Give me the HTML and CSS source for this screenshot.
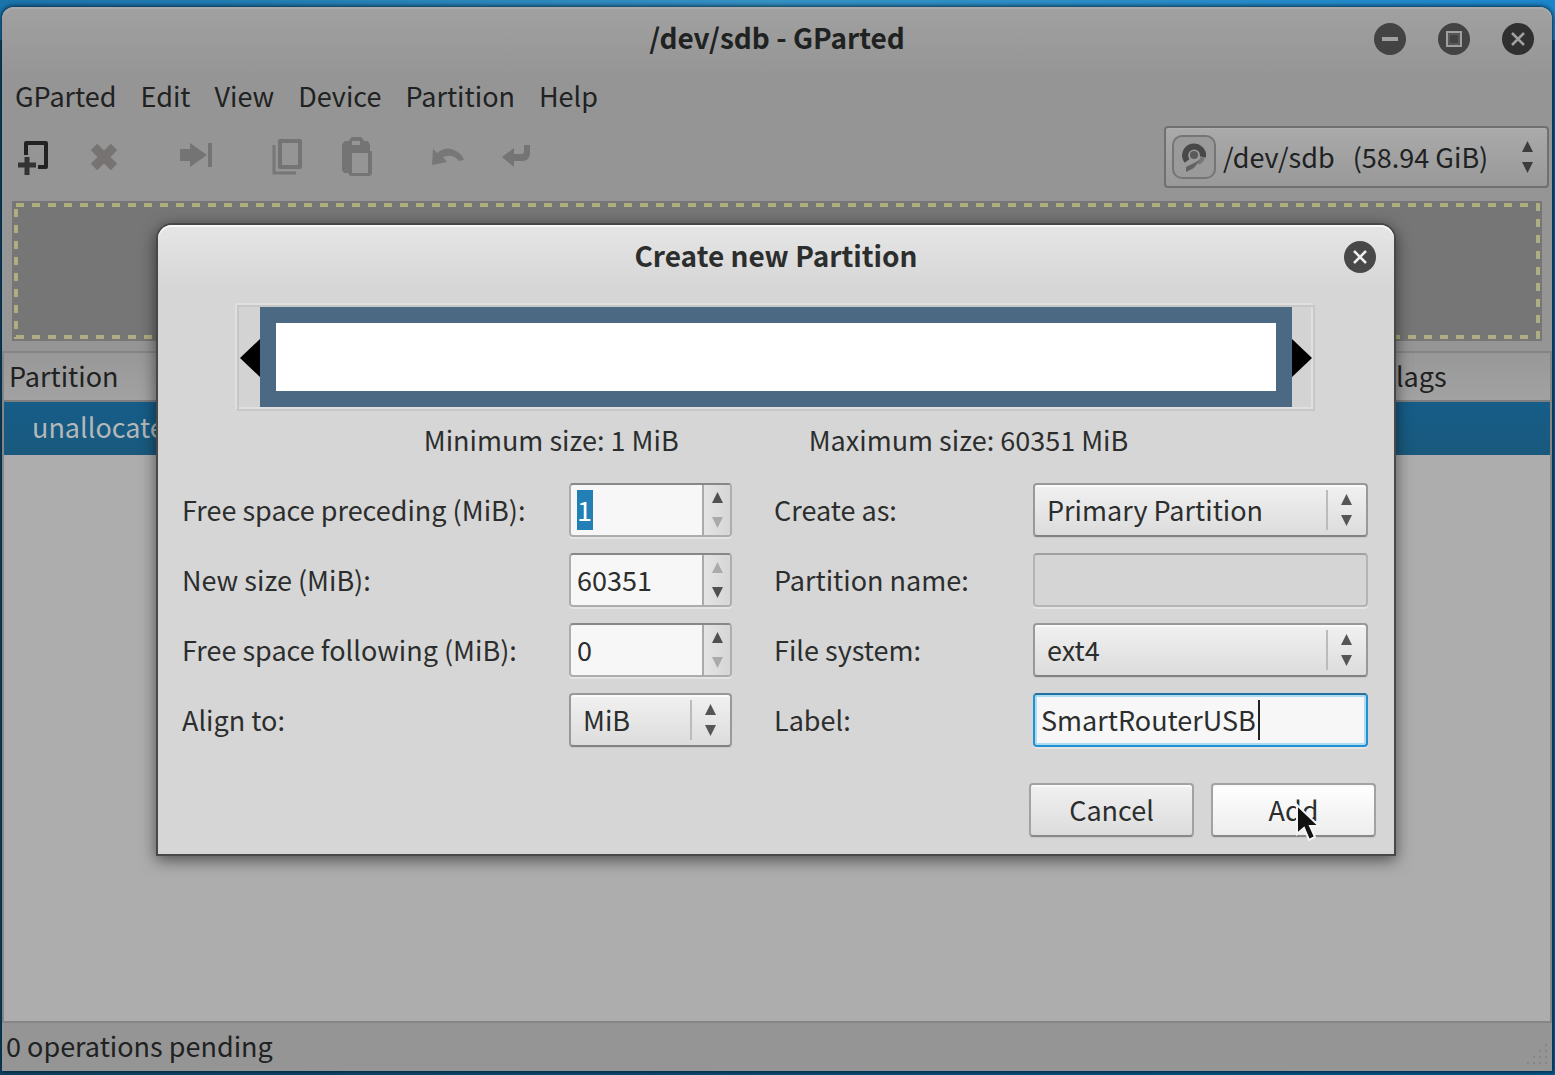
FILE: index.html
```html
<!DOCTYPE html>
<html lang="en">
<head>
<meta charset="utf-8">
<title>/dev/sdb - GParted</title>
<link rel="stylesheet" href="styles.css">
</head>
<body>
<svg class="defs" aria-hidden="true">
  <symbol id="close" viewBox="0 0 32 32"><circle cx="16" cy="16" r="16" fill="currentColor"/><path d="M10 10l12 12M22 10l-12 12" stroke="var(--glyph)" stroke-width="2.500"/></symbol>
  <symbol id="up" viewBox="0 0 11 11"><path d="M5.500 0L11 11H0z" fill="currentColor"/></symbol>
  <symbol id="down" viewBox="0 0 11 11"><path d="M0 0h11L5.500 11z" fill="currentColor"/></symbol>
</svg>
<main class="window">
  <header class="titlebar">
    <h1>/dev/sdb - GParted</h1>
    <div class="controls">
      <button class="round" aria-label="Minimize"><svg viewBox="0 0 32 32"><circle cx="16" cy="16" r="16" fill="#434343"/><path d="M8 16h16" stroke="#a0a0a0" stroke-width="4"/></svg></button>
      <button class="round" aria-label="Maximize"><svg viewBox="0 0 32 32"><circle cx="16" cy="16" r="16" fill="#434343"/><path d="M9 9h14v14H9z" fill="#434343" stroke="#a0a0a0" stroke-width="2"/><path d="M11 11h10v10H11z" fill="none" stroke="#6a6a6a"/></svg></button>
      <button class="round dark" aria-label="Close"><svg><use href="#close"/></svg></button>
    </div>
  </header>
  <nav class="menubar">
    <button>GParted</button><button>Edit</button><button>View</button><button>Device</button><button>Partition</button><button>Help</button>
  </nav>
  <div class="toolbar">
    <button class="tool enabled" aria-label="New"><svg viewBox="18 137 32 40"><path d="M26 155v-12h20v24h-8" fill="none" stroke="#222" stroke-width="4" stroke-linejoin="round"/><path d="M18 165h18M27 157v18" stroke="#333" stroke-width="5"/></svg></button>
    <button class="tool group-end" aria-label="Delete" disabled><svg viewBox="88 137 32 40"><path d="M94 147l20 20M114 147l-20 20" stroke="#777372" stroke-width="9"/></svg></button>
    <button class="tool group-end" aria-label="Resize or move" disabled><svg viewBox="180 137 32 40"><path d="M180 149h10v-6l17 12-17 12v-6h-10zM208 143h4v24h-4z" fill="#747474"/></svg></button>
    <button class="tool" aria-label="Copy" disabled><svg viewBox="272 137 32 40"><path d="M280 141h20v26h-20z" fill="none" stroke="#747474" stroke-width="4" stroke-linejoin="round"/><path d="M274 145v28h22" fill="none" stroke="#777" stroke-width="3"/></svg></button>
    <button class="tool group-end" aria-label="Paste" disabled><svg viewBox="342 137 32 40"><path fill-rule="evenodd" d="M350 139l2-2h9l2 2 1 2h4l2 4v6h2v23l-2 2h-20l-2-3h-4l-2-3v-26l3-3h4zM352 141v4h8v-4zM352 153v20h16v-20z" fill="#747474"/></svg></button>
    <button class="tool" aria-label="Undo" disabled><svg viewBox="434 137 32 40"><path d="M433 149l4 4q10-8 19-2 6 3 8 9l-5 1q-6-8-16-4l4 5-15 3z" fill="#777"/></svg></button>
    <button class="tool" aria-label="Apply" disabled><svg viewBox="504 137 32 40"><path d="M502 157l12-9v6h8q2 0 2-3v-6h6v8q0 7-7 8h-9v6z" fill="#747474"/></svg></button>
    <div class="combo device">
      <svg class="disk" viewBox="1172 135 44 44" aria-hidden="true"><rect x="1173" y="136" width="42" height="42" rx="9" fill="#9a9a9a" stroke="#757575" stroke-width="2"/><path d="M1187 161a9 9 0 1 1 16-4" fill="none" stroke="#484848" stroke-width="6"/><path d="M1203 157a9 9 0 0 1-5 6" fill="none" stroke="#777" stroke-width="4"/><circle cx="1194" cy="155" r="4" fill="#5a5a5a"/><path d="M1200 160l-6 8-8 4v-5l8-4z" fill="#626262"/></svg>
      <select aria-label="Device"><option>/dev/sdb&nbsp;&nbsp; (58.94 GiB)</option></select>
      <span class="arrows"><svg><use href="#up"/></svg><svg><use href="#down"/></svg></span>
    </div>
  </div>
  <div class="disk-map"></div>
  <section class="list">
    <table>
      <colgroup><col><col class="flags"></colgroup>
      <thead><tr><th>Partition</th><th>Flags</th></tr></thead>
      <tbody><tr><td>unallocated</td><td></td></tr></tbody>
    </table>
  </section>
  <footer class="statusbar"><span>0 operations pending</span>
    <svg class="grip" viewBox="0 0 22 22" aria-hidden="true"><path d="M18 0h2v2h-2zM12 6h2v2h-2zM18 6h2v2h-2zM6 12h2v2h-2zM12 12h2v2h-2zM18 12h2v2h-2zM0 18h2v2h-2zM6 18h2v2h-2zM12 18h2v2h-2zM18 18h2v2h-2z" fill="#858585"/></svg>
  </footer>

  <form class="dialog" role="dialog" aria-labelledby="dialog-title">
    <header class="dialog-title">
      <h2 id="dialog-title">Create new Partition</h2>
      <button type="button" class="round" aria-label="Close dialog"><svg><use href="#close"/></svg></button>
    </header>
    <div class="resizer">
      <svg class="handle" viewBox="0 0 20 38"><path d="M20 0v38L0 19z"/></svg>
      <div class="extent"></div>
      <svg class="handle" viewBox="0 0 20 38"><path d="M0 0v38L20 19z"/></svg>
    </div>
    <div class="limits"><span>Minimum size: 1 MiB</span><span>Maximum size: 60351 MiB</span></div>
    <div class="fields">
      <label for="before">Free space preceding (MiB):</label>
      <div class="spin"><input id="before" class="selected" value="1"><div class="steps"><button type="button" aria-label="Increase"><svg><use href="#up"/></svg></button><button type="button" aria-label="Decrease" disabled><svg><use href="#down"/></svg></button></div></div>
      <label for="type">Create as:</label>
      <div class="combo"><select id="type"><option>Primary Partition</option></select><span class="arrows"><svg><use href="#up"/></svg><svg><use href="#down"/></svg></span></div>

      <label for="size">New size (MiB):</label>
      <div class="spin"><input id="size" value="60351"><div class="steps"><button type="button" aria-label="Increase" disabled><svg><use href="#up"/></svg></button><button type="button" aria-label="Decrease"><svg><use href="#down"/></svg></button></div></div>
      <label for="name">Partition name:</label>
      <div class="entry off"><input id="name" disabled></div>

      <label for="after">Free space following (MiB):</label>
      <div class="spin"><input id="after" value="0"><div class="steps"><button type="button" aria-label="Increase"><svg><use href="#up"/></svg></button><button type="button" aria-label="Decrease" disabled><svg><use href="#down"/></svg></button></div></div>
      <label for="fs">File system:</label>
      <div class="combo"><select id="fs"><option>ext4</option></select><span class="arrows"><svg><use href="#up"/></svg><svg><use href="#down"/></svg></span></div>

      <label for="align">Align to:</label>
      <div class="combo"><select id="align"><option>MiB</option></select><span class="arrows"><svg><use href="#up"/></svg><svg><use href="#down"/></svg></span></div>
      <label for="label">Label:</label>
      <div class="entry active"><input id="label" value="SmartRouterUSB"><span class="caret"></span></div>
    </div>
    <div class="actions">
      <button type="button">Cancel</button>
      <button type="submit" class="hover">Add<svg class="pointer" viewBox="0 0 26 40" aria-hidden="true"><path d="M2 2v29l7-6 5 12 6-3-5-11h9z" fill="#111" stroke="#f4f4f4" stroke-width="2"/></svg></button>
    </div>
  </form>
</main>
</body>
</html>
```
FILE: styles.css
```css
* { box-sizing: border-box; }

body {
  margin: 0;
  min-height: 100vh;
  display: flex;
  padding: 7px 3px 4px 2px;
  background: linear-gradient(90deg, #1a73ab, #3592c4 50%, #1c86cb) top / 100% 40px no-repeat, linear-gradient(90deg, #0f4767, #075a8e);
  color: #2c2e2e;
  font: 27px/40px "Noto Sans CJK SC", "Noto Sans", sans-serif;
}

button, input, select {
  font: inherit;
  color: inherit;
  margin: 0;
  padding: 0;
  border: 0;
  border-radius: 0;
  background: none;
  appearance: none;
  outline: none;
  min-width: 0;
}

svg { display: block; flex: none; }
.defs { position: absolute; width: 0; height: 0; }

.window {
  position: relative;
  flex: 1;
  display: flex;
  flex-direction: column;
  border-radius: 12px 12px 0 0;
  background: linear-gradient(#a1a1a1, #959595 70px);
  box-shadow: inset 0 2px #aaa, 0 0 4px 1px rgba(0, 20, 35, .8);
  color: #202222;
}

.titlebar, .dialog-title {
  display: grid;
  grid-template-columns: 1fr auto 1fr;
  align-items: center;
  height: 64px;
}
h1, h2 { grid-column: 2; margin: 0; padding-bottom: 4px; font-size: 28px; line-height: 40px; font-weight: 700; }
.controls { display: flex; gap: 32px; justify-self: end; padding-right: 18px; }
.round { width: 32px; height: 32px; color: #484848; --glyph: #eee; }
.round svg { width: 32px; height: 32px; }
.round.dark { color: #303030; --glyph: #a0a0a0; }

.menubar { display: flex; gap: 24px; padding: 5px 13px 7px; }

.toolbar { display: flex; align-items: center; gap: 38px; height: 68px; padding: 0 3px 0 16px; }
.tool svg { width: 32px; height: 40px; overflow: visible; }
.group-end { margin-right: 22px; }

.combo {
  display: flex;
  align-items: center;
  height: 54px;
  padding: 0 14px 0 12px;
  border: 2px solid #999;
  border-bottom-color: #828282;
  border-radius: 4px;
  background: linear-gradient(#f1f1f1, #dcdcdc);
  box-shadow: inset 0 2px #fafafa, 0 1px 1px #c8c8c8;
}
.combo select { flex: 1; height: 40px; }
.arrows {
  display: flex;
  flex-direction: column;
  justify-content: center;
  align-items: flex-end;
  gap: 10px;
  width: 26px;
  height: 40px;
  border-left: 2px solid #bbb;
  color: #555;
}
.arrows svg, .steps svg { width: 11px; height: 11px; }
.device {
  width: 385px;
  height: 62px;
  margin-left: auto;
  padding: 0 14px 0 6px;
  border-color: #707070;
  background: linear-gradient(#aaa, #999);
  box-shadow: inset 0 1px #b0b0b0;
}
.device .disk { width: 44px; height: 44px; margin-right: 7px; }
.device .arrows { border: 0; color: #3c3c3c; }

.disk-map {
  --dash-x: linear-gradient(90deg, #afae80 8px, transparent 8px);
  --dash-y: linear-gradient(#afae80 8px, transparent 8px);
  height: 140px;
  margin: 10px 10px 10px;
  padding: 2px;
  background:
    var(--dash-x) 2px 0 / 16px 4px repeat-x,
    var(--dash-x) 2px 100% / 16px 4px repeat-x,
    var(--dash-y) 0 6px / 4px 16px repeat-y,
    var(--dash-y) 100% 0 / 4px 16px repeat-y;
  background-origin: content-box;
  background-clip: content-box;
  background-color: #767676;
  box-shadow: inset 0 0 0 2px #767676;
}

.list { flex: 1; border: 2px solid #858585; background: #adadad; }
table { width: 100%; table-layout: fixed; border-collapse: collapse; }
.flags { width: 174px; }
th, td { padding: 0 5px; text-align: left; font-weight: 400; line-height: 46px; }
th { padding-bottom: 1px; border-bottom: 2px solid #7d7d7d; background: linear-gradient(#989898, #a2a2a2); }
td { height: 54px; padding: 0 28px 4px; color: #b4b8ba; }
tbody tr { background: linear-gradient(#155d89, #1a597d); }

.statusbar { display: flex; justify-content: space-between; align-items: flex-end; padding: 3px 3px 5px 4px; }
.grip { width: 22px; height: 22px; }

.dialog {
  position: absolute;
  top: 218px;
  left: 0;
  right: 2px;
  width: 1236px;
  max-width: 100%;
  margin: 0 auto;
  padding: 0 18px 17px;
  border-radius: 14px 14px 0 0;
  background: linear-gradient(#e6e6e6, #d6d6d6 64px);
  box-shadow: inset 0 2px #f8f8f8, 0 0 0 2px #484848, 0 4px 16px 2px rgba(0, 0, 0, .55);
  color: #2c2e2e;
}
.dialog-title .round { justify-self: end; }

.resizer {
  display: flex;
  align-items: flex-start;
  height: 106px;
  margin: 16px 61px 9px;
  padding: 0 1px;
  border: 2px solid #c7c7c7;
  background: #d3d3d3;
  box-shadow: inset -2px -2px #e0e0e0, -2px -2px #dfdfdf;
}
.extent { flex: 1; height: 100px; border: 16px solid #4c6983; background: #fff; }
.handle { width: 20px; height: 38px; align-self: center; }

.limits { display: flex; justify-content: center; gap: 130px; margin-bottom: 23px; }

.fields {
  display: grid;
  grid-template-columns: 387px 163px 301px 1fr;
  row-gap: 16px;
  align-items: center;
  padding: 0 8px 0 6px;
}
.fields label:nth-of-type(even) { padding-left: 42px; }

.spin, .entry {
  position: relative;
  display: flex;
  height: 54px;
  border: 2px solid #adadad;
  border-top-color: #888;
  border-radius: 4px;
  background: #f7f7f7;
  box-shadow: 0 2px #e4e4e4;
  overflow: hidden;
}
.spin input, .entry input { flex: 1; width: 100%; padding: 0 6px; }
.spin .selected {
  color: #fff;
  background: linear-gradient(#2380b7, #2380b7) 6px center / 16px 40px no-repeat;
}
.steps { display: grid; width: 28px; border-left: 2px solid #aaa; background: linear-gradient(90deg, #e4e4e4, #d6d6d6); }
.steps button { display: grid; place-items: center; color: #505050; }
.steps button:disabled { color: #aaa; }
.entry.off { border-color: #b4b4b4; border-top-color: #a0a0a0; background: #d5d5d5; }
.entry.active { border-color: #2590ce; border-top-color: #256f9f; background: #f7f7f7; box-shadow: inset 0 0 0 2px #addcf5, 0 2px #e4e4e4; }
.caret { position: absolute; left: 223px; top: 5px; width: 2px; height: 40px; background: #222; }

.actions { display: flex; justify-content: flex-end; gap: 17px; padding-top: 36px; }
.actions button {
  position: relative;
  width: 165px;
  height: 54px;
  border: 2px solid #a2a2a2;
  border-bottom-color: #888;
  border-radius: 4px;
  background: linear-gradient(#f1f1f1, #dcdcdc);
  box-shadow: inset 0 2px #fafafa, 0 1px 1px #c8c8c8;
}
.actions .hover { background: linear-gradient(#fff, #ededed); }
.pointer { position: absolute; left: 82px; top: 18px; width: 26px; height: 40px; }
```
